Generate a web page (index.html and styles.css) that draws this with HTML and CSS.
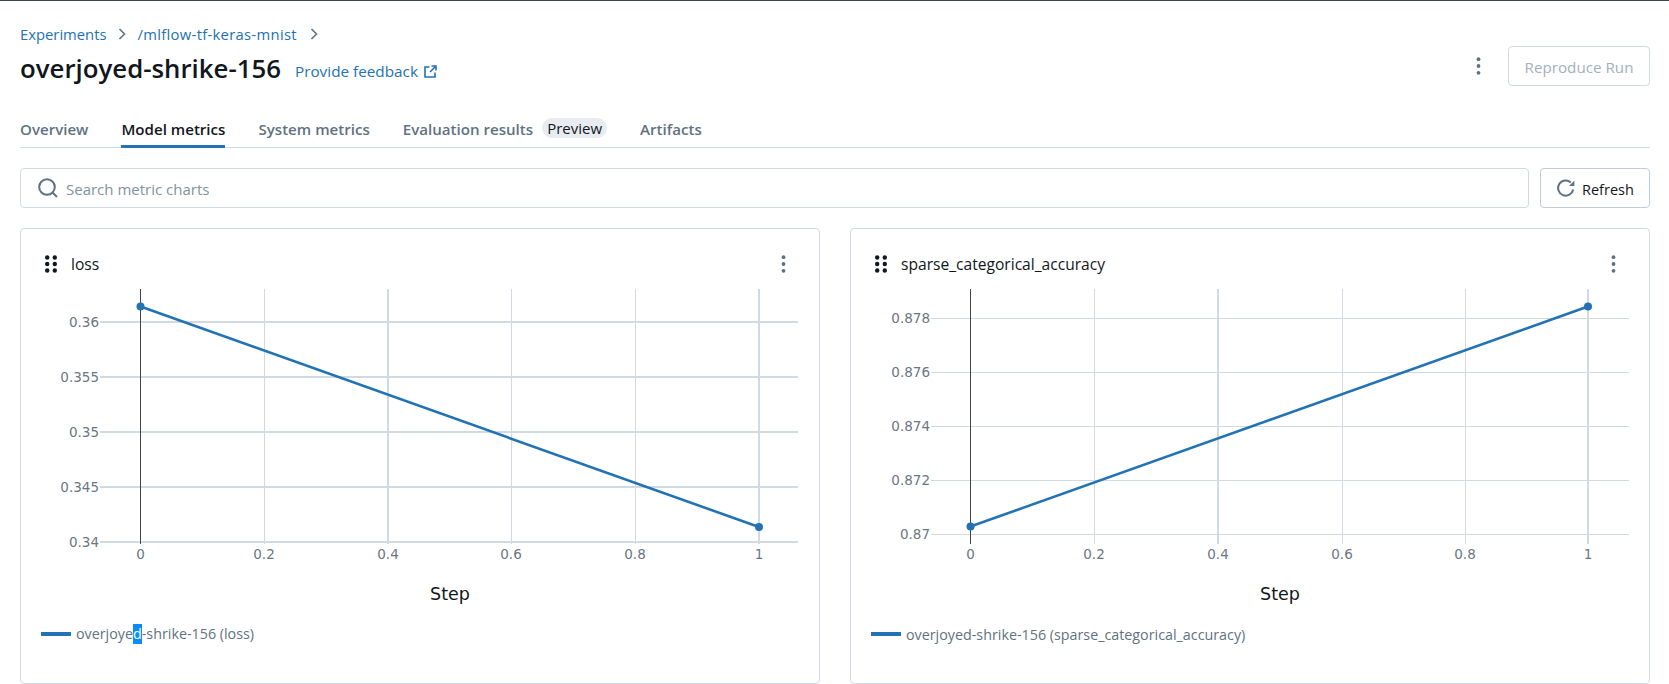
FILE: index.html
```html
<!DOCTYPE html>
<html>
	<head>
		<meta charset="utf-8">
		<title>overjoyed-shrike-156</title>
		<link rel="stylesheet" href="styles.css">
	</head>
	<body>
		<header class="run-header">
			<nav class="crumbs">
				<a>Experiments</a>
				<svg class="chev" viewBox="0 0 8 12"><path d="M1.5 1l5 5-5 5"/></svg>
				<a class="exp-name">/mlflow-tf-keras-mnist</a>
				<svg class="chev" viewBox="0 0 8 12"><path d="M1.5 1l5 5-5 5"/></svg>
			</nav>
			<div class="title-row">
				<h1>overjoyed-shrike-156</h1>
				<a class="feedback">Provide feedback
					<svg viewBox="0 0 13 13"><path d="M5.5 2H1v10h10V7.5M7.5 1H12v4.5M12 1L6 7"/></svg>
				</a>
				<div class="actions">
					<svg class="kebab" viewBox="0 0 4 18"><circle cx="2" cy="2.2" r="1.9"/><circle cx="2" cy="9" r="1.9"/><circle cx="2" cy="15.8" r="1.9"/></svg>
					<button class="btn btn-off">Reproduce Run</button>
				</div>
			</div>
		</header>
		<div class="tabs">
			<a>Overview</a>
			<a class="active">Model metrics</a>
			<a>System metrics</a>
			<a>Evaluation results<span class="pill">Preview</span></a>
			<a>Artifacts</a>
		</div>
		<div class="toolbar">
			<label class="search">
				<svg viewBox="0 0 20 20"><circle cx="9" cy="9" r="7.8"/><path d="M14.5 14.5l4.5 4.5"/></svg>
				<span>Search metric charts</span>
			</label>
			<button class="btn btn-refresh">
				<svg viewBox="0 0 18 18"><path d="M16.2 10.5A7.6 7.6 0 1 1 13.8 3.4"/><path class="fill" d="M17.4 1.6v5.4h-5.4z"/></svg>
				Refresh
			</button>
		</div>
		<main class="charts">
			<section class="card">
				<div class="card-head">
					<svg class="grip" viewBox="0 0 12 18"><circle cx="2.2" cy="2.5" r="2.2"/><circle cx="9.8" cy="2.5" r="2.2"/><circle cx="2.2" cy="9" r="2.2"/><circle cx="9.8" cy="9" r="2.2"/><circle cx="2.2" cy="15.5" r="2.2"/><circle cx="9.8" cy="15.5" r="2.2"/></svg>
					<h3>loss</h3>
					<svg class="kebab" viewBox="0 0 4 18"><circle cx="2" cy="2.2" r="1.9"/><circle cx="2" cy="9" r="1.9"/><circle cx="2" cy="15.8" r="1.9"/></svg>
				</div>
				<svg class="plot" width="798" height="330" viewBox="0 0 798 330">
					<g class="grid">
						<path class="thin" d="M243 9v255M490 9v255M614 9v255"/>
						<path class="thick" d="M367 9v255M738 9v255M79 42h698M79 97h698M79 152h698M79 207h698M79 262h698"/>
					</g>
					<path class="zero" d="M119.5 9v255"/>
					<g class="ticks ty">
						<text x="78" y="47">0.36</text>
						<text x="78" y="102">0.355</text>
						<text x="78" y="157">0.35</text>
						<text x="78" y="212">0.345</text>
						<text x="78" y="267">0.34</text>
					</g>
					<g class="ticks tx">
						<text x="119.5" y="279">0</text>
						<text x="243" y="279">0.2</text>
						<text x="367" y="279">0.4</text>
						<text x="490" y="279">0.6</text>
						<text x="614" y="279">0.8</text>
						<text x="738" y="279">1</text>
					</g>
					<text class="axis-title" x="429" y="320">Step</text>
					<path class="series" d="M119.5 26.5L738 247"/>
					<circle class="dot" cx="119.5" cy="26.5" r="4"/>
					<circle class="dot" cx="738" cy="247" r="4"/>
				</svg>
				<div class="legend"><i></i><span>overjoye<mark>d</mark>-shrike-156 (loss)</span></div>
			</section>
			<section class="card">
				<div class="card-head">
					<svg class="grip" viewBox="0 0 12 18"><circle cx="2.2" cy="2.5" r="2.2"/><circle cx="9.8" cy="2.5" r="2.2"/><circle cx="2.2" cy="9" r="2.2"/><circle cx="9.8" cy="9" r="2.2"/><circle cx="2.2" cy="15.5" r="2.2"/><circle cx="9.8" cy="15.5" r="2.2"/></svg>
					<h3>sparse_categorical_accuracy</h3>
					<svg class="kebab" viewBox="0 0 4 18"><circle cx="2" cy="2.2" r="1.9"/><circle cx="2" cy="9" r="1.9"/><circle cx="2" cy="15.8" r="1.9"/></svg>
				</div>
				<svg class="plot" width="798" height="330" viewBox="0 0 798 330">
					<g class="grid">
						<path class="thin" d="M243 9v255M491 9v255M614 9v255M80 38h698M80 92.5h698M80 146h698M80 200h698M80 254h698"/>
						<path class="thick" d="M367 9v255M737 9v255"/>
					</g>
					<path class="zero" d="M119.5 9v255"/>
					<g class="ticks ty">
						<text x="79" y="43">0.878</text>
						<text x="79" y="97">0.876</text>
						<text x="79" y="151">0.874</text>
						<text x="79" y="205">0.872</text>
						<text x="79" y="259">0.87</text>
					</g>
					<g class="ticks tx">
						<text x="119.5" y="279">0</text>
						<text x="243" y="279">0.2</text>
						<text x="367" y="279">0.4</text>
						<text x="491" y="279">0.6</text>
						<text x="614" y="279">0.8</text>
						<text x="737" y="279">1</text>
					</g>
					<text class="axis-title" x="429" y="320">Step</text>
					<path class="series" d="M119.5 246.5L737 26.5"/>
					<circle class="dot" cx="119.5" cy="246.5" r="4"/>
					<circle class="dot" cx="737" cy="26.5" r="4"/>
				</svg>
				<div class="legend"><i></i><span>overjoyed-shrike-156 (sparse_categorical_accuracy)</span></div>
			</section>
		</main>
	</body>
</html>
```

FILE: styles.css
```css
html, body {
	height: 100%;
}
body {
	margin: 0;
	padding: 0 19px 0 20px;
	box-sizing: border-box;
	height: 684px;
	overflow: hidden;
	border-top: 1px solid #37474f;
	font-family: "Open Sans", "Noto Sans", sans-serif;
	color: #11171c;
	background: #fff;
}
a {
	color: #2272b4;
}
button {
	font-family: inherit;
}
svg {
	display: block;
	flex: none;
}

.crumbs {
	display: flex;
	align-items: center;
	height: 20px;
	padding-top: 23px;
	font-size: 14.8px;
}
.exp-name {
	letter-spacing: 0.3px;
}
.chev {
	width: 8px;
	height: 12px;
	margin: 0 12px 0 11px;
	fill: none;
	stroke: #5f7281;
	stroke-width: 1.6;
}
.exp-name + .chev {
	margin-left: 13px;
}
.title-row {
	display: flex;
	align-items: center;
	height: 48px;
}
.title-row h1 {
	margin: 0;
	font-size: 25.8px;
	font-weight: 600;
}
.feedback {
	display: flex;
	align-items: center;
	gap: 6px;
	margin: 6px 0 0 14px;
	font-size: 15.3px;
}
.feedback svg {
	width: 13px;
	height: 13px;
	fill: none;
	stroke: currentColor;
	stroke-width: 1.6;
}
.actions {
	display: flex;
	align-items: center;
	margin: 0 0 4px auto;
}
.kebab {
	width: 5px;
	height: 18px;
	fill: #5f7281;
}
.actions .kebab {
	margin-right: 27px;
}
.btn {
	display: flex;
	align-items: center;
	box-sizing: border-box;
	height: 40px;
	border: 1px solid #c0cdd8;
	border-radius: 4px;
	background: #fff;
	font-size: 14.5px;
}
.btn-off {
	width: 142px;
	justify-content: center;
	padding-top: 2px;
	border-color: #d1d9e1;
	color: #a2b1bf;
	font-size: 15.2px;
}

.tabs {
	display: flex;
	gap: 33px;
	height: 40px;
	margin-top: 15px;
	border-bottom: 1px solid #d1d9e1;
	font-size: 15.1px;
	font-weight: 600;
	line-height: 44px;
}
.tabs a {
	display: flex;
	align-items: flex-start;
	box-sizing: border-box;
	height: 41px;
	color: #5f7281;
}
.tabs .active {
	color: #11171c;
	border-bottom: 3px solid #2272b4;
}
.pill {
	height: 20px;
	margin: 11px 0 0 9px;
	padding: 0 5px;
	border-radius: 10px;
	background: #e8ecf0;
	color: #11171c;
	font-weight: 400;
	font-size: 15px;
	line-height: 21px;
}

.toolbar {
	display: flex;
	gap: 11px;
	margin-top: 20px;
}
.search {
	flex: 1;
	display: flex;
	align-items: center;
	gap: 8px;
	box-sizing: border-box;
	height: 40px;
	padding-left: 17px;
	border: 1px solid #d1d9e1;
	border-radius: 4px;
	font-size: 15px;
	color: #82929f;
}
.search span {
	padding-top: 2px;
}
.search svg {
	width: 20px;
	height: 20px;
	fill: none;
	stroke: #5f7281;
	stroke-width: 2;
}
.btn-refresh {
	width: 110px;
	gap: 7px;
	padding: 2px 0 0 16px;
	color: #11171c;
}
.btn-refresh svg {
	width: 18px;
	height: 18px;
	margin-top: -2px;
	fill: none;
	stroke: #5f7281;
	stroke-width: 2;
}
.btn-refresh .fill {
	fill: #5f7281;
	stroke: none;
}

.charts {
	display: grid;
	grid-template-columns: 800px 800px;
	gap: 30px;
	margin-top: 20px;
}
.card {
	box-sizing: border-box;
	height: 456px;
	border: 1px solid #d1d9e1;
	border-radius: 4px;
}
.card-head {
	display: flex;
	align-items: center;
	height: 18px;
	padding: 26px 33px 0 24px;
}
.card-head .grip {
	width: 12px;
	height: 18px;
	margin-right: 14px;
	fill: #11171c;
}
.card-head h3 {
	flex: 1;
	margin: 0;
	font-size: 15.6px;
	font-weight: 500;
}
.plot {
	margin-top: 7px;
}
.grid path {
	fill: none;
	stroke: #d1d9e1;
	shape-rendering: crispEdges;
}
.grid .thin {
	stroke-width: 1;
}
.grid .thick {
	stroke-width: 2;
}
.zero {
	stroke: #444;
	stroke-width: 1;
	shape-rendering: crispEdges;
}
.ticks text {
	font-family: "DejaVu Sans", sans-serif;
	font-size: 13.5px;
	fill: #6b7683;
}
.ty text {
	text-anchor: end;
}
.tx text {
	text-anchor: middle;
}
.axis-title {
	font-family: "DejaVu Sans", sans-serif;
	font-size: 17.5px;
	fill: #11171c;
	text-anchor: middle;
}
.series {
	fill: none;
	stroke: #2272b4;
	stroke-width: 2.6;
}
.dot {
	fill: #2272b4;
}
.legend {
	display: flex;
	align-items: center;
	gap: 5px;
	height: 20px;
	margin-top: 14px;
	padding-left: 20px;
	font-size: 14.3px;
	color: #5f7281;
}
.legend i {
	width: 30px;
	height: 4px;
	background: #2272b4;
}
mark {
	background: #0a8cff;
	color: #fff;
	display: inline-block;
	line-height: 20px;
}
```
